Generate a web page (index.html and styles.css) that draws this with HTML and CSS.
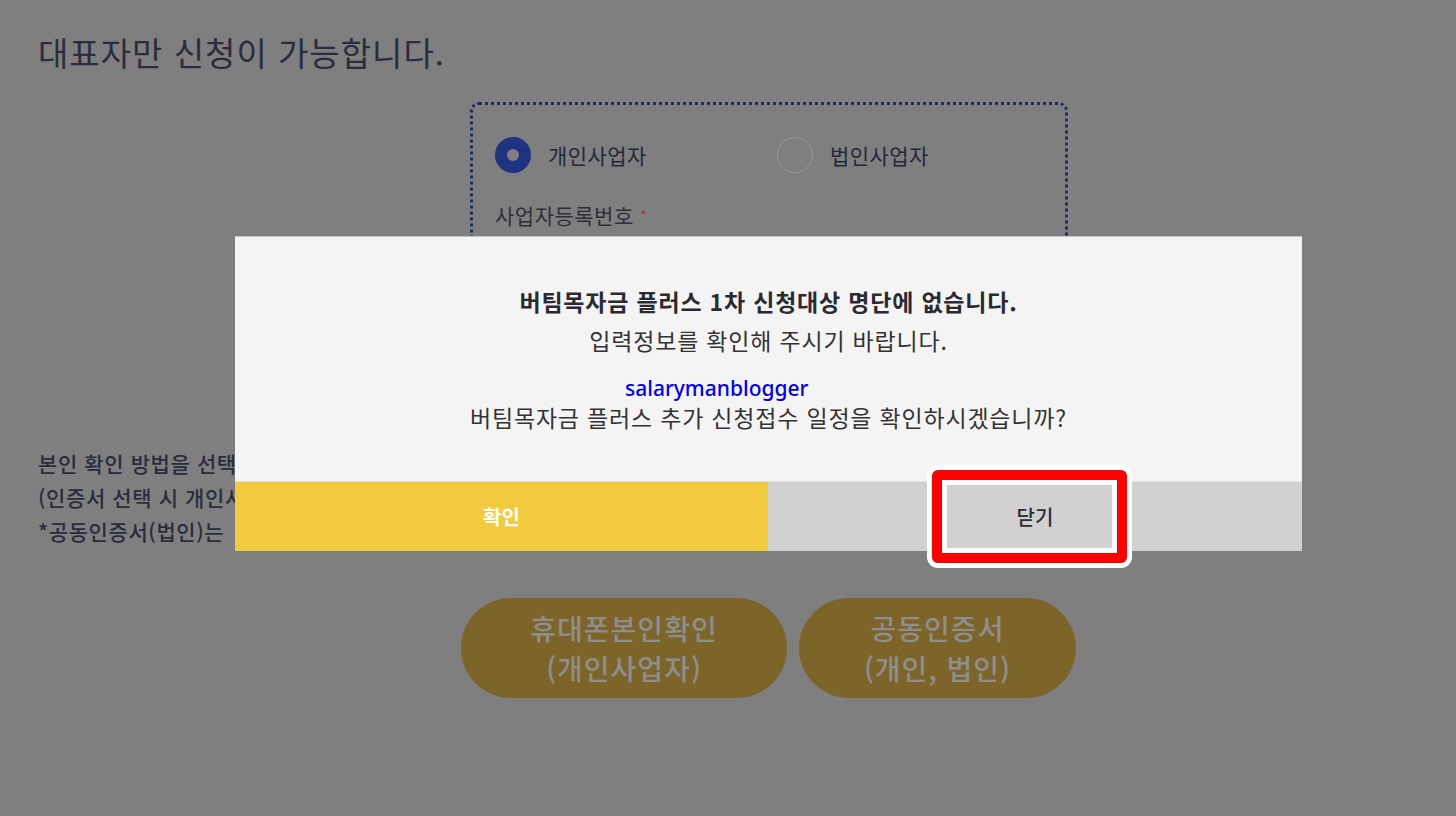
FILE: index.html
```html
<!DOCTYPE html>
<html lang="ko">
<head>
<meta charset="utf-8">
<title>버팀목자금 플러스</title>
<link rel="stylesheet" href="styles.css">
</head>
<body>
<div class="page">
  <h1 class="title">대표자만 신청이 가능합니다.</h1>
  <div class="form-box">
    <div class="radio-row">
      <label class="radio"><span class="dot checked"></span><span>개인사업자</span></label>
      <label class="radio"><span class="dot"></span><span>법인사업자</span></label>
    </div>
    <div class="field-label">사업자등록번호 <span class="req">*</span></div>
  </div>
  <div class="notice">
    <p>본인 확인 방법을 선택해 주세요.</p>
    <p>(인증서 선택 시 개인사업자 가능)</p>
    <p>*공동인증서(법인)는</p>
  </div>
  <div class="auth-buttons">
    <button class="pill pill-phone">휴대폰본인확인<br>(개인사업자)</button>
    <button class="pill pill-cert">공동인증서<br>(개인, 법인)</button>
  </div>
</div>

<div class="modal">
  <div class="modal-body">
    <p class="msg-strong">버팀목자금 플러스 1차 신청대상 명단에 없습니다.</p>
    <p>입력정보를 확인해 주시기 바랍니다.</p>
    <p class="blank">&nbsp;</p>
    <p>버팀목자금 플러스 추가 신청접수 일정을 확인하시겠습니까?</p>
    <span class="watermark">salarymanblogger</span>
  </div>
  <div class="modal-actions">
    <button class="btn btn-ok">확인</button>
    <button class="btn btn-close">닫기</button>
  </div>
</div>
<div class="highlight"></div>
</body>
</html>
```

FILE: styles.css
```css
* { box-sizing: border-box; }
html, body {
  margin: 0;
  padding: 0;
  width: 1456px;
  height: 816px;
  overflow: hidden;
  background: #7f7f7f;
  font-family: "Noto Sans CJK KR", "Noto Sans", sans-serif;
}
p { margin: 0; }
button { font-family: inherit; border: 0; padding: 0; cursor: pointer; }

.page {
  padding: 30px 0 0 38px;
  display: flex;
  flex-direction: column;
  align-items: flex-start;
}
.title {
  margin: 0;
  font-size: 33px;
  line-height: 44px;
  letter-spacing: 1px;
  font-weight: 400;
  color: #2a2d3c;
}
.form-box {
  margin: 28px 0 0 432px;
  width: 598px;
  height: 320px;
  border: 3px dotted #1c2a6a;
  border-radius: 9px;
  padding: 32px 0 0 22px;
}
.radio-row {
  display: grid;
  grid-template-columns: 282px auto;
  height: 36px;
}
.radio {
  display: flex;
  align-items: center;
  gap: 17px;
  font-size: 21px;
  letter-spacing: 0.4px;
  color: #24273a;
}
.dot {
  width: 36px;
  height: 36px;
  border-radius: 50%;
  border: 1px solid #999999;
  flex: none;
}
.dot.checked {
  border: 12px solid #1f3381;
}
.field-label {
  margin-top: 27px;
  font-size: 21px;
  line-height: 30px;
  letter-spacing: 0.5px;
  color: #2e2f36;
}
.req { color: #a8321e; font-size: 14px; vertical-align: top; }

.notice {
  margin-top: 24px;
  font-size: 21px;
  line-height: 34px;
  letter-spacing: 0.6px;
  font-weight: 500;
  color: #2a2c3b;
}
.auth-buttons {
  margin: 50px 0 0 423px;
  display: flex;
  gap: 12px;
}
.pill {
  height: 100px;
  border-radius: 50px;
  background: #7d6529;
  color: #8e8e8e;
  font-size: 28px;
  line-height: 40px;
  letter-spacing: 1px;
  font-weight: 500;
}
.pill-phone { width: 326px; }
.pill-cert { width: 277px; }

.modal {
  position: absolute;
  left: 235px;
  top: 236px;
  width: 1067px;
  background: #f4f4f4;
  border-top: 1px solid #c4c4c4;
}
.modal-body {
  position: relative;
  padding: 45px 0 45px;
  text-align: center;
  font-size: 23px;
  line-height: 38.5px;
  letter-spacing: 0.8px;
  color: #333333;
}
.msg-strong { font-weight: 700; color: #2a2a33; }
.watermark {
  position: absolute;
  left: 390px;
  top: 142px;
  font-family: "Noto Sans", sans-serif;
  font-size: 21px;
  line-height: 18px;
  letter-spacing: 0;
  font-weight: 500;
  color: #0000ee;
}
.modal-actions {
  display: grid;
  grid-template-columns: 533px 534px;
  height: 70px;
  border-top: 1px solid #e2e2e2;
}
.btn {
  font-size: 20px;
  height: 100%;
}
.btn-ok { background: #f2ca3e; color: #ffffff; font-weight: 700; }
.btn-close { background: #d1d1d1; color: #2c2c33; font-weight: 500; }

.highlight {
  position: absolute;
  left: 932px;
  top: 470px;
  width: 195px;
  height: 93px;
  border: 10px solid #ff0000;
  border-radius: 6px;
  box-shadow: 0 0 0 5px #ffffff, inset 0 0 0 5px #ffffff;
}
```
